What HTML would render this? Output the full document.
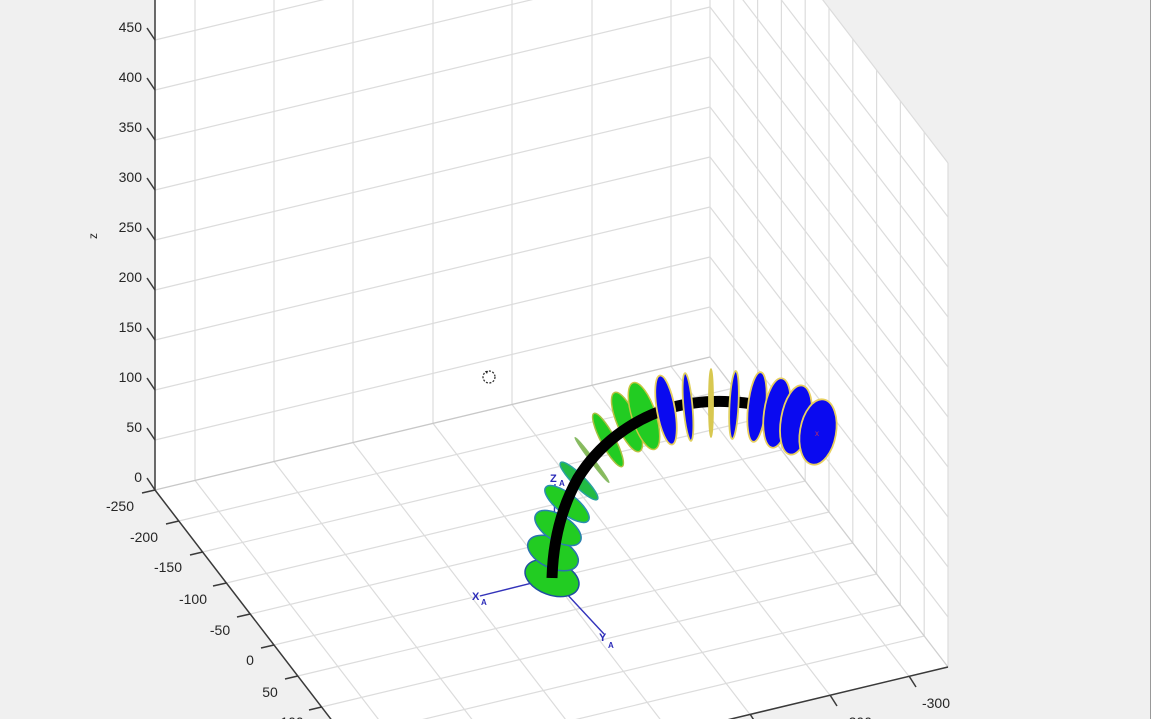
<!DOCTYPE html>
<html><head><meta charset="utf-8"><style>
html,body{margin:0;padding:0;background:#f0f0f0;width:1151px;height:719px;overflow:hidden;}
svg{display:block;}
text{font-family:"Liberation Sans",sans-serif;fill:#262626;}
</style></head><body>
<svg width="1151" height="719" viewBox="0 0 1151 719" xmlns="http://www.w3.org/2000/svg">
<rect width="1151" height="719" fill="#f0f0f0"/>
<defs>
<clipPath id="rw"><polygon points="710,357 948,667 948,163 710,-147"/></clipPath>
<clipPath id="fl"><polygon points="155,490 710,357 948,667 393,800"/></clipPath>
</defs>
<polygon points="155,490 710,357 710,-147 155,-10" fill="#fff"/>
<polygon points="710,357 948,667 948,163 710,-147" fill="#fff"/>
<polygon points="155,490 710,357 948,667 393,800" fill="#fff"/>
<g stroke="#dcdcdc" stroke-width="1.2" fill="none">
<line x1="155" y1="440" x2="710" y2="307"/><line x1="155" y1="390" x2="710" y2="257"/>
<line x1="155" y1="340" x2="710" y2="207"/><line x1="155" y1="290" x2="710" y2="157"/>
<line x1="155" y1="240" x2="710" y2="107"/><line x1="155" y1="190" x2="710" y2="57"/>
<line x1="155" y1="140" x2="710" y2="7"/><line x1="155" y1="90" x2="710" y2="-43"/>
<line x1="155" y1="40" x2="710" y2="-93"/>
<line x1="195" y1="0" x2="195" y2="480.4"/><line x1="274" y1="0" x2="274" y2="461.5"/>
<line x1="353" y1="0" x2="353" y2="442.6"/><line x1="433" y1="0" x2="433" y2="423.4"/>
<line x1="512" y1="0" x2="512" y2="404.5"/><line x1="592" y1="0" x2="592" y2="385.3"/>
<line x1="671" y1="0" x2="671" y2="366.4"/><line x1="710" y1="0" x2="710" y2="357"/>
<g clip-path="url(#rw)">
<line x1="710" y1="307" x2="948" y2="617"/><line x1="710" y1="257" x2="948" y2="567"/>
<line x1="710" y1="207" x2="948" y2="517"/><line x1="710" y1="157" x2="948" y2="467"/>
<line x1="710" y1="107" x2="948" y2="417"/><line x1="710" y1="57" x2="948" y2="367"/>
<line x1="710" y1="7" x2="948" y2="317"/><line x1="710" y1="-43" x2="948" y2="267"/>
<line x1="710" y1="-93" x2="948" y2="217"/>
<line x1="733.8" y1="-200" x2="733.8" y2="388"/><line x1="757.6" y1="-200" x2="757.6" y2="419"/>
<line x1="781.4" y1="-200" x2="781.4" y2="450"/><line x1="805.2" y1="-200" x2="805.2" y2="481"/>
<line x1="829" y1="-200" x2="829" y2="512"/><line x1="852.8" y1="-200" x2="852.8" y2="543"/>
<line x1="876.6" y1="-200" x2="876.6" y2="574"/><line x1="900.4" y1="-200" x2="900.4" y2="605"/>
<line x1="924.2" y1="-200" x2="924.2" y2="636"/>
</g>
<line x1="710" y1="-147" x2="948" y2="163"/><line x1="948" y1="163" x2="948" y2="667"/>
<g clip-path="url(#fl)">
<line x1="178.8" y1="521" x2="733.8" y2="388"/><line x1="202.6" y1="552" x2="757.6" y2="419"/>
<line x1="226.4" y1="583" x2="781.4" y2="450"/><line x1="250.2" y1="614" x2="805.2" y2="481"/>
<line x1="274" y1="645" x2="829" y2="512"/><line x1="297.8" y1="676" x2="852.8" y2="543"/>
<line x1="321.6" y1="707" x2="876.6" y2="574"/><line x1="345.4" y1="738" x2="900.4" y2="605"/>
<line x1="369.2" y1="769" x2="924.2" y2="636"/>
<line x1="195" y1="480.4" x2="433" y2="790.4"/><line x1="274" y1="461.5" x2="512" y2="771.5"/>
<line x1="353" y1="442.6" x2="591" y2="752.6"/><line x1="433" y1="423.4" x2="671" y2="733.4"/>
<line x1="512" y1="404.5" x2="750" y2="714.5"/><line x1="592" y1="385.3" x2="830" y2="695.3"/>
<line x1="671" y1="366.4" x2="909" y2="676.4"/>
</g>
</g>
<line x1="155" y1="490" x2="710" y2="357" stroke="#c8c8c8" stroke-width="1.3"/>
<line x1="710" y1="357" x2="948" y2="667" stroke="#d0d0d0" stroke-width="1.3"/>
<g stroke="#3a3a3a" stroke-width="1.5" fill="none">
<line x1="155" y1="0" x2="155" y2="490"/>
<line x1="155" y1="490" x2="393" y2="800"/>
<line x1="948" y1="667" x2="393" y2="800"/>
<line x1="147" y1="478" x2="155" y2="490"/><line x1="147" y1="428" x2="155" y2="440"/>
<line x1="147" y1="378" x2="155" y2="390"/><line x1="147" y1="328" x2="155" y2="340"/>
<line x1="147" y1="278" x2="155" y2="290"/><line x1="147" y1="228" x2="155" y2="240"/>
<line x1="147" y1="178" x2="155" y2="190"/><line x1="147" y1="128" x2="155" y2="140"/>
<line x1="147" y1="78" x2="155" y2="90"/><line x1="147" y1="28" x2="155" y2="40"/>
<line x1="142" y1="493" x2="155" y2="490"/><line x1="166" y1="524" x2="178.8" y2="521"/>
<line x1="190" y1="555" x2="202.6" y2="552"/><line x1="213" y1="586" x2="226.4" y2="583"/>
<line x1="237" y1="617" x2="250.2" y2="614"/><line x1="261" y1="648" x2="274" y2="645"/>
<line x1="285" y1="679" x2="297.8" y2="676"/><line x1="309" y1="710" x2="321.6" y2="707"/>
<line x1="909" y1="676" x2="916" y2="687"/><line x1="830" y1="695" x2="837" y2="706"/>
<line x1="750" y1="714" x2="757" y2="725"/>
</g>
<g font-size="14" text-anchor="end">
<text x="142" y="482">0</text><text x="142" y="432">50</text><text x="142" y="382">100</text>
<text x="142" y="332">150</text><text x="142" y="282">200</text><text x="142" y="232">250</text>
<text x="142" y="182">300</text><text x="142" y="132">350</text><text x="142" y="82">400</text>
<text x="142" y="32">450</text>
</g>
<g font-size="14" text-anchor="middle">
<text x="120" y="511">-250</text><text x="144" y="542">-200</text><text x="168" y="572">-150</text>
<text x="193" y="604">-100</text><text x="220" y="635">-50</text><text x="250" y="665">0</text>
<text x="270" y="697">50</text><text x="292" y="727">100</text>
<text x="936" y="708">-300</text><text x="858" y="727">-200</text>
</g>
<text x="101" y="240" font-size="12" transform="rotate(-90 97 240)" text-anchor="middle">z</text>
<circle cx="489" cy="377" r="6" fill="none" stroke="#333" stroke-width="1.3" stroke-dasharray="2 1.5"/>
<path d="M485,371 l3,0 l-1,3 z" fill="#222"/>
<g stroke="#3333bb" stroke-width="1.4">
<line x1="552" y1="578" x2="480" y2="596"/>
<line x1="552" y1="578" x2="604" y2="634"/>
<line x1="553" y1="578" x2="555" y2="484"/>
</g>
<g stroke-width="1.5">
<ellipse cx="552" cy="578" rx="28" ry="17" transform="rotate(20 552 578)" fill="#22cc22" stroke="#1f4f9f"/>
<ellipse cx="553" cy="553" rx="27" ry="15" transform="rotate(25 553 553)" fill="#22cc22" stroke="#2a70b0"/>
<ellipse cx="558" cy="528" rx="26" ry="13" transform="rotate(32 558 528)" fill="#22cc22" stroke="#2a80b0"/>
<ellipse cx="567" cy="504" rx="27" ry="10" transform="rotate(38 567 504)" fill="#22cc22" stroke="#2a8fb0"/>
<ellipse cx="579" cy="481" rx="26" ry="6" transform="rotate(45 579 481)" fill="#22bb44" stroke="#2aa0a0"/>
<ellipse cx="592" cy="460" rx="28" ry="1.8" transform="rotate(53 592 460)" fill="#88bb55" stroke="#88bb66"/>
<ellipse cx="608" cy="440" rx="30" ry="7" transform="rotate(62 608 440)" fill="#22cc22" stroke="#a8c040"/>
<ellipse cx="627" cy="422" rx="32" ry="10" transform="rotate(67 627 422)" fill="#22cc22" stroke="#b8c040"/>
<ellipse cx="644" cy="416" rx="35" ry="12" transform="rotate(72 644 416)" fill="#22cc22" stroke="#c8c840"/>
</g>
<path d="M552,578 C553,545 560,510 578,478 C598,446 630,420 670,408 C705,398 745,400 780,410 L818,430" fill="none" stroke="#000" stroke-width="11"/>
<g stroke-width="1.8">
<ellipse cx="666" cy="410" rx="35" ry="9" transform="rotate(80 666 410)" fill="#0a0af0" stroke="#e8d060"/>
<ellipse cx="688" cy="407" rx="34" ry="4.5" transform="rotate(85 688 407)" fill="#0a0af0" stroke="#e0d060"/>
<ellipse cx="711" cy="403" rx="34" ry="2" transform="rotate(90 711 403)" fill="#d8c850" stroke="#d8c850"/>
<ellipse cx="734" cy="405" rx="34" ry="4.5" transform="rotate(93 734 405)" fill="#0a0af0" stroke="#e0d060"/>
<ellipse cx="757" cy="407" rx="35" ry="9" transform="rotate(96 757 407)" fill="#0a0af0" stroke="#e8d060"/>
<ellipse cx="777" cy="413" rx="35" ry="13" transform="rotate(98 777 413)" fill="#0a0af0" stroke="#e8d060"/>
<ellipse cx="796" cy="420" rx="35" ry="15" transform="rotate(100 796 420)" fill="#0a0af0" stroke="#e8d060"/>
<ellipse cx="818" cy="432" rx="33" ry="18" transform="rotate(100 818 432)" fill="#0a0af0" stroke="#e8d060"/>
</g>
<text x="817" y="436" font-size="8" style="fill:#c03060" text-anchor="middle">x</text>
<g font-size="11" font-weight="bold">
<text x="472" y="600" style="fill:#2a2ab8">X</text><text x="481" y="605" font-size="8" style="fill:#2a2ab8">A</text>
<text x="550" y="482" style="fill:#2a2ab8">Z</text><text x="559" y="486" font-size="8" style="fill:#2a2ab8">A</text>
<text x="599" y="641" style="fill:#2a2ab8">Y</text><text x="608" y="648" font-size="8" style="fill:#2a2ab8">A</text>
</g>
<line x1="1150.5" y1="0" x2="1150.5" y2="719" stroke="#999" stroke-width="1"/>
</svg>
</body></html>
